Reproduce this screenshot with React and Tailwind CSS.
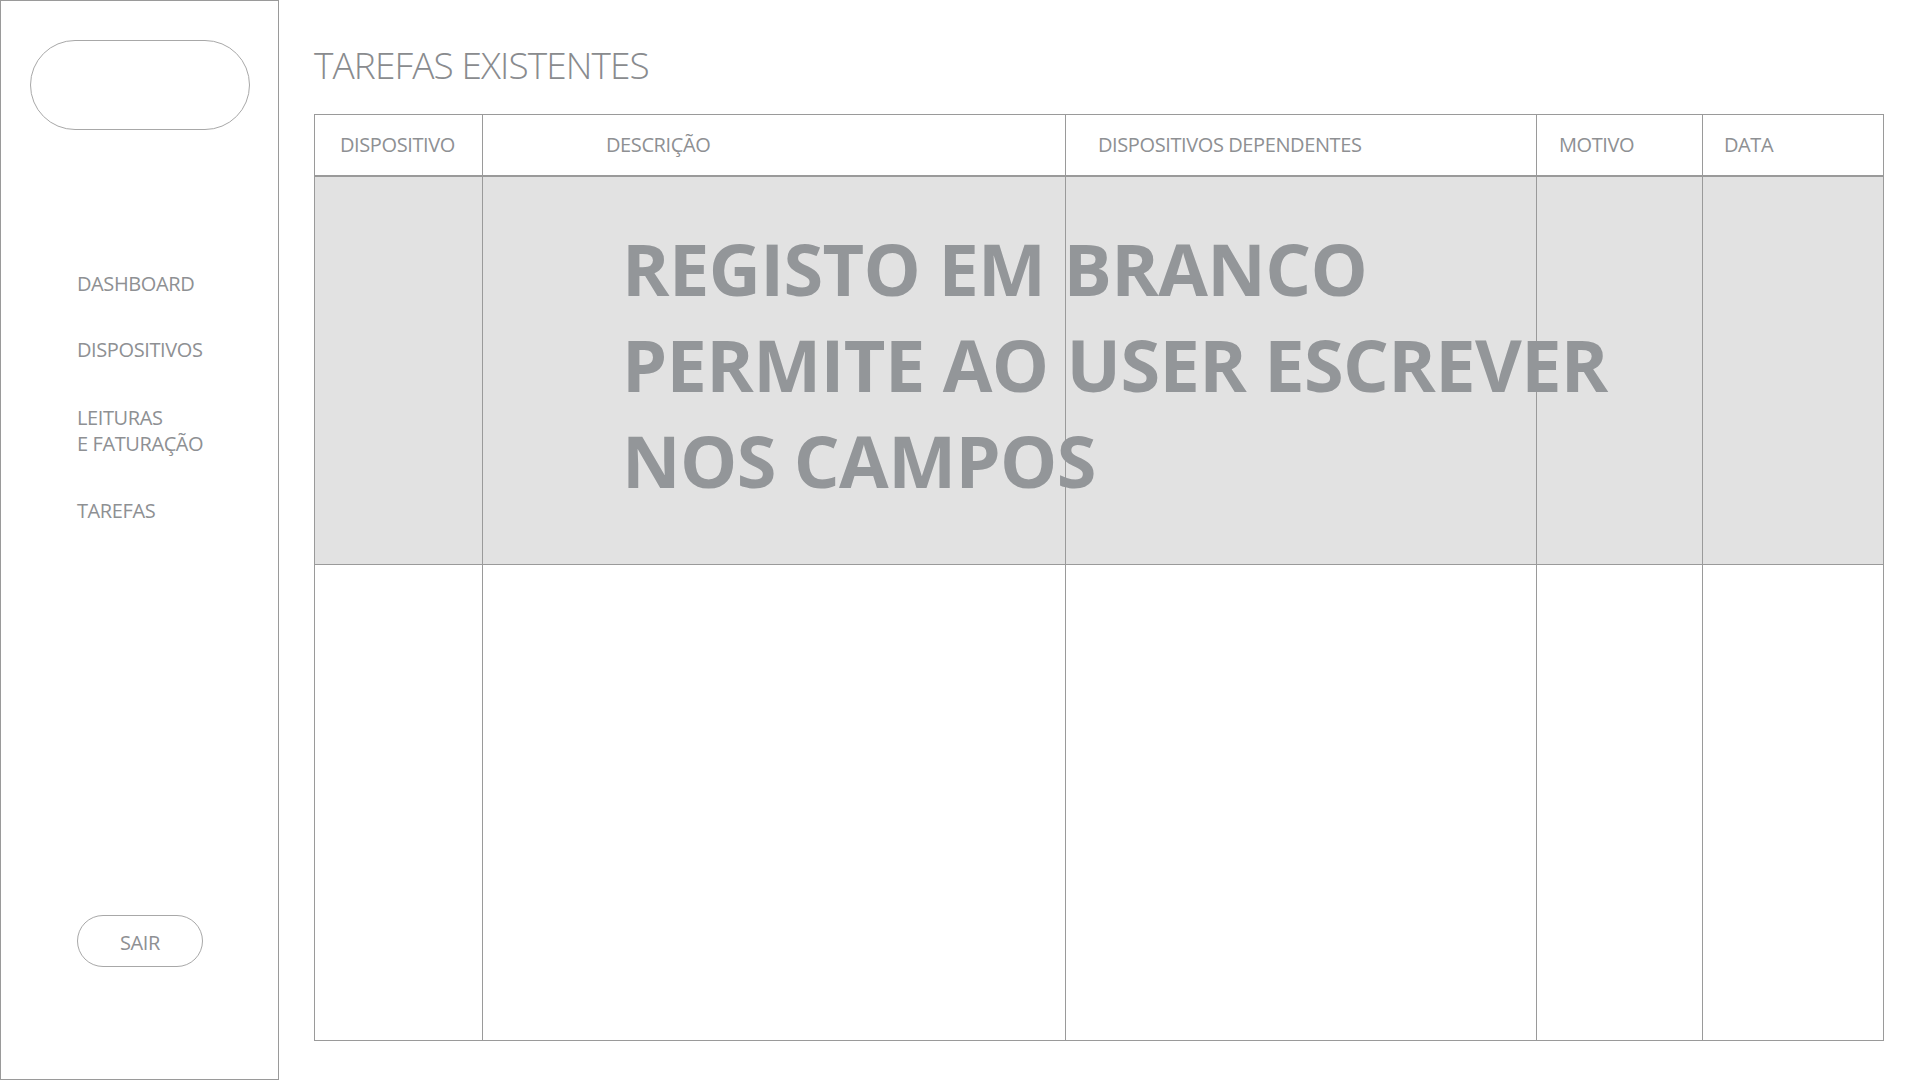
export default function App() {
  const cols = ["DISPOSITIVO", "DESCRIÇÃO", "DISPOSITIVOS DEPENDENTES", "MOTIVO", "DATA"];
  const pads = ["pl-[25px]", "pl-[123px]", "pl-[32px]", "pl-[22px]", "pl-[21px]"];
  return (
    <div className="flex w-[1920px] h-[1080px] bg-white overflow-hidden" style={{ fontFamily: '"Open Sans", "Noto Sans", sans-serif' }}>
      <aside className="w-[279px] h-[1080px] shrink-0 border border-[#9a9a9a] flex flex-col">
        <div className="ml-[29px] mt-[39px] w-[220px] h-[90px] rounded-full border border-[#a8a8a8]" />
        <nav className="ml-[76px] mt-[141px] flex flex-col text-[20px] leading-[26px] tracking-[-0.4px] text-[#8e9093]">
          <div>DASHBOARD</div>
          <div className="mt-[40px]">DISPOSITIVOS</div>
          <div className="mt-[42px]">LEITURAS<br />E FATURAÇÃO</div>
          <div className="mt-[41px]">TAREFAS</div>
        </nav>
        <div className="mt-auto mb-[112px] ml-[76px] w-[126px] h-[52px] pt-[4px] rounded-full border border-[#a8a8a8] flex items-center justify-center text-[20px] tracking-[-0.4px] text-[#8e9093]">
          SAIR
        </div>
      </aside>
      <main className="pl-[35px] flex flex-col">
        <h1 className="mt-[46px] text-[37px] leading-[38px] font-light tracking-[-0.9px] text-[#898b8e]">TAREFAS EXISTENTES</h1>
        <div className="relative mt-[30px] w-[1570px] h-[927px] border border-[#9a9a9a] grid grid-cols-[167px_583px_471px_166px_181px] grid-rows-[62px_388px_1fr]">
          {cols.map((c, i) => (
            <div key={c} className={`flex items-center border-b-2 border-[#9a9a9a] text-[20px] tracking-[-0.4px] text-[#8e9093] ${pads[i]} ${i > 0 ? "border-l" : ""}`}>
              {c}
            </div>
          ))}
          {cols.map((c, i) => (
            <div key={c + "g"} className={`bg-[#e2e2e2] border-b border-[#9a9a9a] ${i > 0 ? "border-l" : ""}`} />
          ))}
          {cols.map((c, i) => (
            <div key={c + "w"} className={`border-[#9a9a9a] ${i > 0 ? "border-l" : ""}`} />
          ))}
          <div className="absolute left-[307px] top-[105px] text-[72px] leading-[96px] font-bold tracking-[-0.6px] text-[#939699] whitespace-nowrap">
            REGISTO EM BRANCO<br />PERMITE AO USER ESCREVER<br />NOS CAMPOS
          </div>
        </div>
      </main>
    </div>
  );
}
